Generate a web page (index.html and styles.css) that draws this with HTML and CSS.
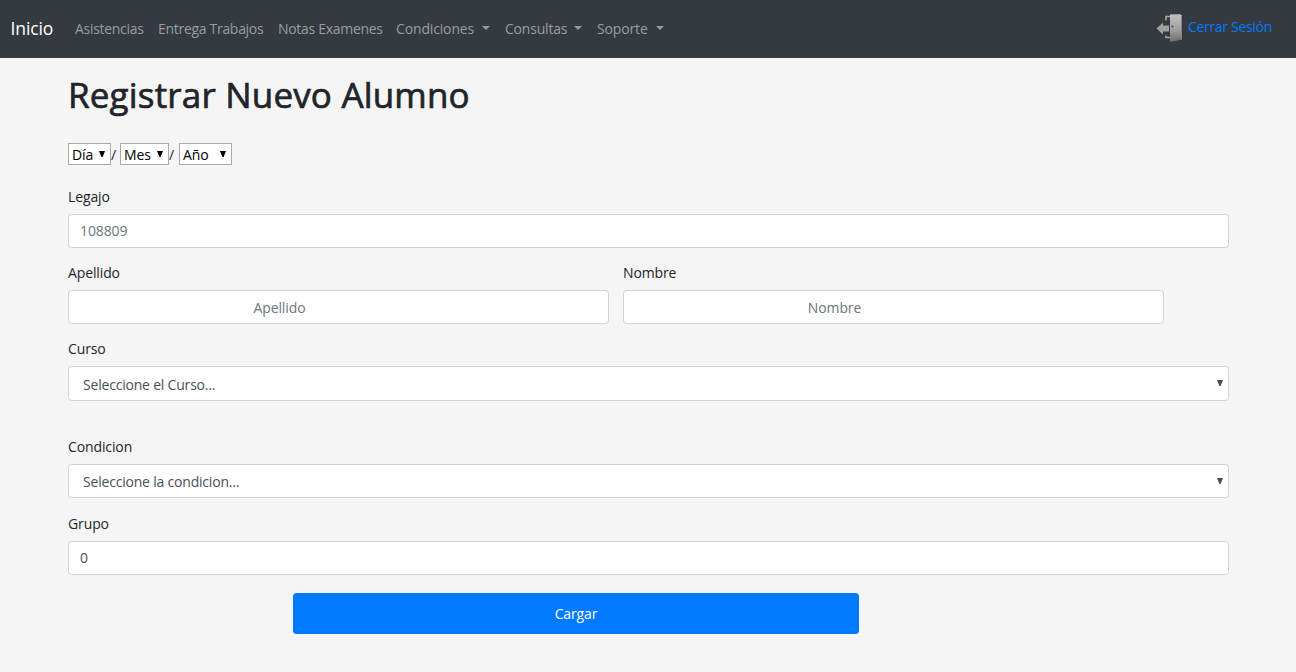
FILE: index.html
```html
<!DOCTYPE html>
<html lang="es">
<head>
<meta charset="utf-8">
<title>Registrar Nuevo Alumno</title>
<link rel="stylesheet" href="styles.css">
</head>
<body>
<nav class="navbar">
  <a class="brand">Inicio</a>
  <ul class="menu">
    <li class="w-asistencias">Asistencias</li>
    <li class="w-entrega">Entrega Trabajos</li>
    <li class="w-notas">Notas Examenes</li>
    <li class="w-condiciones">Condiciones<i class="caret"></i></li>
    <li class="w-consultas">Consultas<i class="caret"></i></li>
    <li class="w-soporte">Soporte<i class="caret"></i></li>
  </ul>
  <a class="logout">
    <svg class="door" width="28" height="30" viewBox="0 0 28 30">
      <defs>
        <linearGradient id="metal" x1="0" y1="0" x2="0" y2="1">
          <stop offset="0" stop-color="#c2c2c2"/><stop offset=".55" stop-color="#a0a0a0"/><stop offset="1" stop-color="#6c6c6c"/>
        </linearGradient>
      </defs>
      <path d="M11 7.500V3.500H15M11 22.500V24.500H15" fill="none" stroke="#a6a6a6" stroke-width="1.500"/>
      <path d="M15 1.500L25 1.200L27 2.500V26.500L15 29Z" fill="url(#metal)"/>
      <path d="M26.500 2.500V26.500" stroke="#858585" stroke-width="1"/>
      <circle cx="17.500" cy="13.500" r="1" fill="#444"/>
      <path d="M1.500 15.500L8 9.500V12.500H14V18.500H8V21.500Z" fill="#a0a0a0"/>
    </svg>
    <span>Cerrar Sesión</span>
  </a>
</nav>
<main class="page">
  <h1 class="title">Registrar Nuevo Alumno</h1>
  <div class="date">
    <span class="pick day"><select><option>Día</option></select><svg class="arrow" viewBox="0 0 6 6"><path d="M0 0H6L3.600 6H2.400Z"/></svg></span><span class="slash">/</span>
    <span class="pick month"><select><option>Mes</option></select><svg class="arrow" viewBox="0 0 6 6"><path d="M0 0H6L3.600 6H2.400Z"/></svg></span><span class="slash wide">/</span>
    <span class="pick year"><select><option>Año</option></select><svg class="arrow" viewBox="0 0 6 6"><path d="M0 0H6L3.600 6H2.400Z"/></svg></span>
  </div>
  <form>
    <div class="group">
      <label>Legajo</label>
      <input class="control" placeholder="108809">
    </div>
    <div class="row">
      <div class="group">
        <label>Apellido</label>
        <input class="control name" placeholder="Apellido">
      </div>
      <div class="group">
        <label>Nombre</label>
        <input class="control name" placeholder="Nombre">
      </div>
    </div>
    <div class="group course">
      <label>Curso</label>
      <div class="pick full"><select class="control"><option>Seleccione el Curso...</option></select><svg class="arrow" viewBox="0 0 6 6"><path d="M0 0H6L3.600 6H2.400Z"/></svg></div>
    </div>
    <div class="group condition">
      <label>Condicion</label>
      <div class="pick full"><select class="control"><option>Seleccione la condicion...</option></select><svg class="arrow" viewBox="0 0 6 6"><path d="M0 0H6L3.600 6H2.400Z"/></svg></div>
    </div>
    <div class="group last">
      <label>Grupo</label>
      <input class="control" value="0">
    </div>
    <button class="submit" type="button">Cargar</button>
  </form>
</main>
</body>
</html>
```
FILE: styles.css
```css
* { box-sizing: border-box; }
body {
  margin: 0;
  height: 672px;
  overflow: hidden;
  background: #f5f5f5;
  color: #212529;
  font: 14px/21px "Open Sans", "Noto Sans", sans-serif;
  letter-spacing: -0.12px;
}
input, select, button { font: inherit; letter-spacing: inherit; color: inherit; margin: 0; }
.navbar {
  display: flex;
  align-items: center;
  height: 58px;
  padding: 0 24px 2px 10.500px;
  background: #343a40;
}
.brand { width: 64.500px; color: #fff; font-size: 17.500px; letter-spacing: -0.1px; }
.menu {
  display: flex;
  flex: 1;
  margin: 0;
  padding: 0;
  list-style: none;
  color: #999c9f;
  white-space: nowrap;
  letter-spacing: -0.3px;
}
.menu li { display: flex; align-items: center; }
.w-asistencias { width: 83px; }
.w-entrega { width: 120px; }
.w-notas { width: 118px; }
.w-condiciones { width: 109px; letter-spacing: -0.15px; }
.w-consultas { width: 92px; letter-spacing: -0.2px; }
.w-soporte { width: 67px; letter-spacing: -0.15px; }
.caret {
  margin: 0 15px 0 auto;
  border: 4px solid transparent;
  border-top-color: currentColor;
  border-bottom: 0;
}
.w-soporte .caret { margin-right: 0; }
.logout { display: flex; align-items: center; gap: 5px; padding-bottom: 1px; color: #007bff; white-space: nowrap; letter-spacing: -0.3px; }
.logout span { padding-bottom: 3px; }
.page { width: 1161px; margin-left: 68px; }
.title {
  margin: 0;
  padding-top: 16px;
  height: 85px;
  font-size: 35px;
  line-height: 42px;
  font-weight: 500;
  letter-spacing: 0.18px;
  -webkit-text-stroke: 0.7px #212529;
  white-space: nowrap;
}
.date { display: flex; height: 43px; }
.pick { position: relative; display: block; height: 22px; color: #000; }
.pick select {
  display: block;
  width: 100%;
  height: 22px;
  padding: 0 3px;
  border: 1px solid #a9a9a9;
  border-radius: 0;
  background: #fff;
  appearance: none;
  line-height: 19px;
}
.day { width: 43px; }
.month { width: 49px; }
.year { width: 53px; }
.slash { width: 9px; padding-top: 1px; }
.slash.wide { width: 10px; }
.arrow { position: absolute; top: 8px; right: 6px; width: 6px; height: 6px; fill: currentColor; }
.group { margin-bottom: 14px; }
label { display: block; height: 21px; margin-bottom: 7px; }
.control {
  display: block;
  width: 100%;
  height: 34px;
  padding: 0 11px 2px;
  border: 1px solid #ced4da;
  border-radius: 3.500px;
  background: #fff;
  color: #495057;
}
.control::placeholder { color: #6c757d; opacity: 1; }
.row { display: flex; gap: 14px; }
.row .group { width: 541px; }
.name { padding: 0 129px 0 11px; text-align: center; }
.full { height: 34px; color: #495057; }
.pick.full .control { height: 34px; padding: 0 14px; border-color: #ced4da; border-radius: 3.500px; letter-spacing: -0.2px; }
.full .arrow { top: 14px; }
.course { margin-bottom: 35px; }
.course .full, .course .pick.full .control { height: 35px; }
.course .pick.full .control { padding-top: 2px; }
.condition { margin-bottom: 15px; }
.last { margin-bottom: 18px; }
.submit {
  display: block;
  width: 566px;
  height: 41px;
  margin-left: 225px;
  padding: 0;
  border: 0;
  border-radius: 3.500px;
  background: #007bff;
  color: #fff;
}
```
